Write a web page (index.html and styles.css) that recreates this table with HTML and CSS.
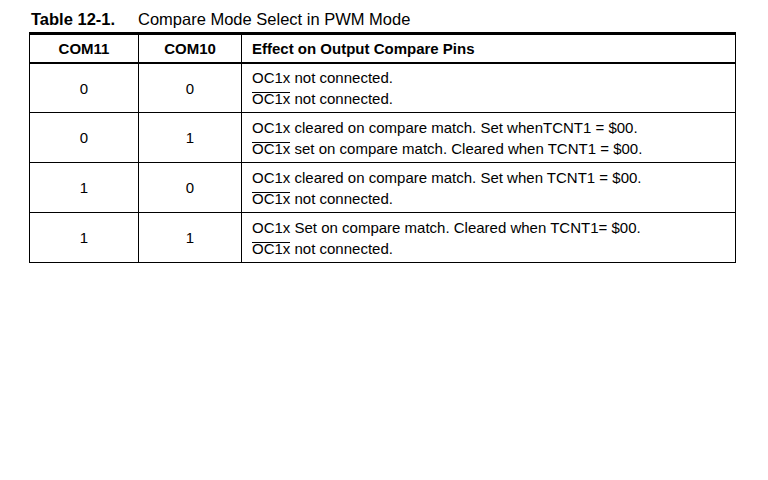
FILE: index.html
```html
<!DOCTYPE html>
<html>
<head>
<meta charset="utf-8">
<link rel="stylesheet" href="styles.css">
</head>
<body>
<div class="page">
  <div class="caption"><span class="cap-label">Table 12-1.</span><span class="cap-text">Compare Mode Select in PWM Mode</span></div>
  <div class="table">
    <div class="row head">
      <div class="cell num">COM11</div>
      <div class="cell num">COM10</div>
      <div class="cell desc">Effect on Output Compare Pins</div>
    </div>
    <div class="row first">
      <div class="cell num">0</div>
      <div class="cell num">0</div>
      <div class="cell desc"><div>OC1x not connected.</div><div><span class="ov">OC1x</span> not connected.</div></div>
    </div>
    <div class="row">
      <div class="cell num">0</div>
      <div class="cell num">1</div>
      <div class="cell desc"><div>OC1x cleared on compare match. Set whenTCNT1 = $00.</div><div><span class="ov">OC1x</span> set on compare match. Cleared when TCNT1 = $00.</div></div>
    </div>
    <div class="row">
      <div class="cell num">1</div>
      <div class="cell num">0</div>
      <div class="cell desc"><div>OC1x cleared on compare match. Set when TCNT1 = $00.</div><div><span class="ov">OC1x</span> not connected.</div></div>
    </div>
    <div class="row">
      <div class="cell num">1</div>
      <div class="cell num">1</div>
      <div class="cell desc"><div>OC1x Set on compare match. Cleared when TCNT1= $00.</div><div><span class="ov">OC1x</span> not connected.</div></div>
    </div>
  </div>
</div>
</body>
</html>
```
FILE: styles.css
```css
html, body {
  margin: 0;
  padding: 0;
  background: #fff;
}
body {
  font-family: "Liberation Sans", Arial, sans-serif;
  color: #000;
}
.page {
  padding: 9px 0 0 29px;
  width: 707px;
}
.caption {
  display: flex;
  font-size: 16.5px;
  line-height: 20px;
  height: 23px;
  padding-left: 2px;
}
.cap-label {
  font-weight: bold;
  width: 107px;
}
.table {
  border-top: 3px solid #000;
  border-left: 1px solid #000;
  border-right: 1px solid #000;
}
.row {
  display: grid;
  grid-template-columns: 109px 103px 1fr;
  border-bottom: 1px solid #000;
  height: 49px;
}
.row.first {
  height: 48px;
}
.row.head {
  height: 27px;
  border-bottom: 2px solid #000;
  font-weight: bold;
}
.cell {
  font-size: 15px;
  display: flex;
  flex-direction: column;
  justify-content: center;
  border-right: 1px solid #000;
}
.cell:last-child {
  border-right: none;
}
.num {
  align-items: center;
}
.desc {
  padding-left: 10px;
  line-height: 21px;
}
.ov {
  display: inline-block;
  line-height: 12px;
  border-top: 1px solid #000;
}
```
